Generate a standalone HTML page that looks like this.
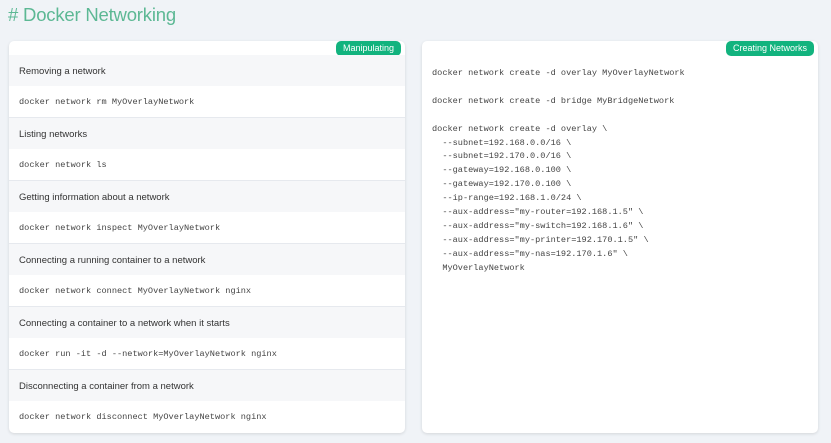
<!DOCTYPE html><html><head><style>
*{margin:0;padding:0;box-sizing:border-box}
body{width:831px;height:443px;background:#f0f3f7;font-family:"Liberation Sans",sans-serif;position:relative;overflow:hidden}
h1{position:absolute;left:8px;top:4px;font-size:18.5px;font-weight:normal;color:#5cb894;letter-spacing:-0.2px}
.card{position:absolute;top:41px;width:396px;height:392px;background:#fff;border-radius:5px;box-shadow:0 1px 3px rgba(0,0,0,.12);overflow:hidden}
.badge{position:absolute;right:4px;top:0;height:15px;padding:0 7px;background:#12b37e;color:#fff;font-size:9px;line-height:15px;border-radius:5px}
.sec{position:absolute;left:0;width:396px}
.hd{height:31px;background:#f6f7f9;font-size:9.5px;color:#333;padding-left:10px;line-height:33px}
.cd{height:32px;font-family:"Liberation Mono",monospace;font-size:8.6px;color:#444;padding-left:10px;line-height:32px;border-bottom:1px solid #e6e9ee}
pre{position:absolute;left:10px;top:26px;font-family:"Liberation Mono",monospace;font-size:8.6px;color:#444;line-height:13.9px}
</style></head><body>
<h1># Docker Networking</h1>
<div class="card" style="left:9px">
<div class="badge">Manipulating</div>
<div class="sec" style="top:14px"><div class="hd">Removing a network</div><div class="cd">docker network rm MyOverlayNetwork</div></div>
<div class="sec" style="top:77px"><div class="hd">Listing networks</div><div class="cd">docker network ls</div></div>
<div class="sec" style="top:140px"><div class="hd">Getting information about a network</div><div class="cd">docker network inspect MyOverlayNetwork</div></div>
<div class="sec" style="top:203px"><div class="hd">Connecting a running container to a network</div><div class="cd">docker network connect MyOverlayNetwork nginx</div></div>
<div class="sec" style="top:266px"><div class="hd">Connecting a container to a network when it starts</div><div class="cd">docker run -it -d --network=MyOverlayNetwork nginx</div></div>
<div class="sec" style="top:329px"><div class="hd">Disconnecting a container from a network</div><div class="cd" style="border:none">docker network disconnect MyOverlayNetwork nginx</div></div>
</div>
<div class="card" style="left:422px">
<div class="badge">Creating Networks</div>
<pre>docker network create -d overlay MyOverlayNetwork

docker network create -d bridge MyBridgeNetwork

docker network create -d overlay \
  --subnet=192.168.0.0/16 \
  --subnet=192.170.0.0/16 \
  --gateway=192.168.0.100 \
  --gateway=192.170.0.100 \
  --ip-range=192.168.1.0/24 \
  --aux-address="my-router=192.168.1.5" \
  --aux-address="my-switch=192.168.1.6" \
  --aux-address="my-printer=192.170.1.5" \
  --aux-address="my-nas=192.170.1.6" \
  MyOverlayNetwork</pre>
</div>
</body></html>
